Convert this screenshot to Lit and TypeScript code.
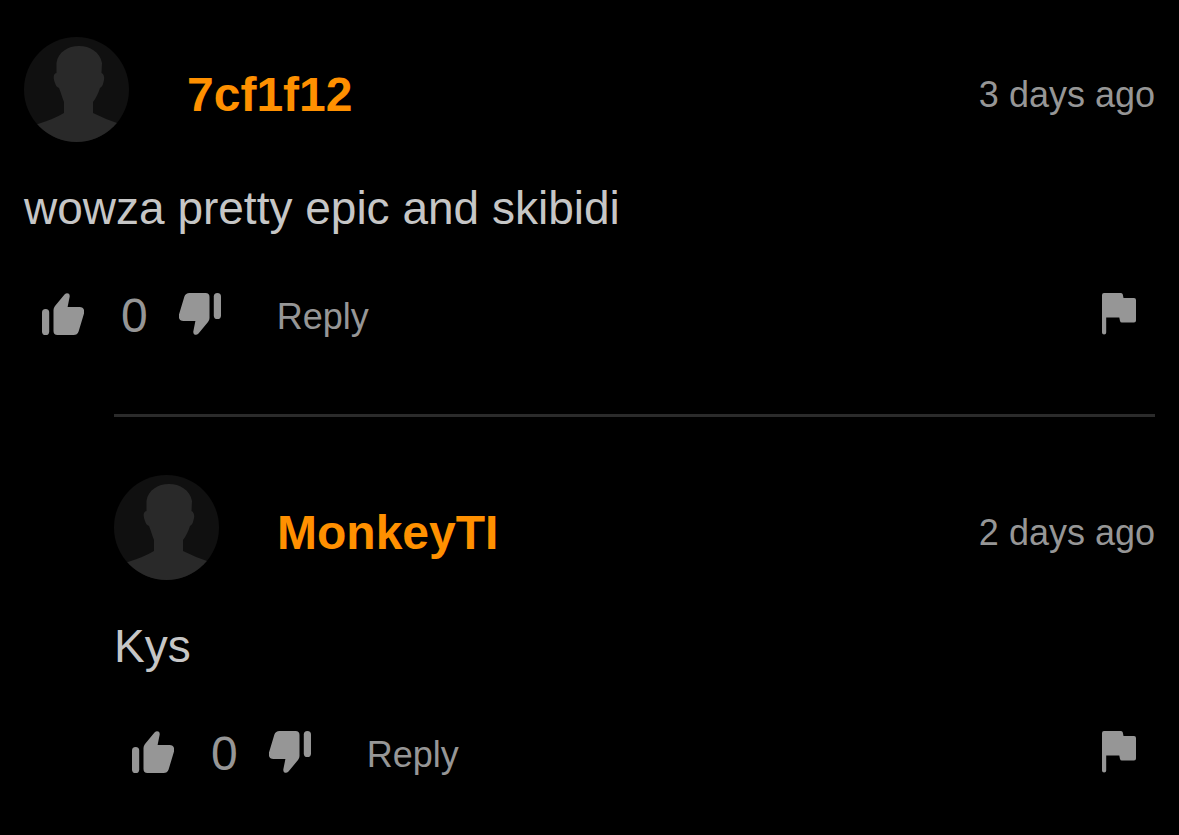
import { LitElement, html, svg, css } from "lit";
import { customElement, property } from "lit/decorators.js";

interface Comment {
  author: string;
  age: string;
  text: string;
  votes: number;
}

const thread: { comment: Comment; replies: Comment[] } = {
  comment: { author: "7cf1f12", age: "3 days ago", text: "wowza pretty epic and skibidi", votes: 0 },
  replies: [{ author: "MonkeyTI", age: "2 days ago", text: "Kys", votes: 0 }],
};

// Thumb pointing up; the dislike icon is the same shape turned round.
const thumb = svg`
  <rect x="0" y="16" width="7.200" height="26" rx="3.600" />
  <path d="M11.500 17Q11.500 14.800 13 13L22.500 1.500Q24.800 -.8 26.900 .8Q28 2 27.600 4L25.600 14H37.500Q42.200 14 42.200 18.600Q42.200 20 41.700 21.500L36.600 38.500Q35.400 42 31.500 42H15.500Q11.500 42 11.500 38Z" />
`;

@customElement("comment-item")
export class CommentItem extends LitElement {
  @property({ attribute: false }) comment!: Comment;

  static styles = css`
    :host {
      display: block;
    }
    .header {
      display: flex;
      align-items: center;
    }
    .avatar {
      width: 105px;
      height: 105px;
      flex: none;
      border-radius: 50%;
      margin-right: 58px;
    }
    .byline {
      flex: 1;
      display: flex;
      align-items: center;
      justify-content: space-between;
      padding-top: 10px;
    }
    .author {
      color: #ff9000;
      font-size: 48px;
      font-weight: 700;
      line-height: 56px;
      text-decoration: none;
    }
    .age {
      color: #969696;
      font-size: 36px;
      line-height: 40px;
    }
    .text {
      margin: 38px 0 50px;
      color: #c6c6c6;
      font-size: 46px;
      line-height: 56px;
    }
    .actions {
      display: flex;
      align-items: center;
      height: 56px;
      padding: 0 18px;
      color: #969696;
    }
    button {
      display: block;
      padding: 0;
      border: 0;
      background: none;
      color: inherit;
      font: inherit;
      cursor: pointer;
    }
    .icon {
      display: block;
      width: 42px;
      height: 42px;
      fill: currentColor;
    }
    .down {
      transform: rotate(180deg);
    }
    .flag {
      width: 35px;
    }
    .votes {
      margin: 0 31px 0 37px;
      padding-top: 4px;
      font-size: 48px;
      line-height: 56px;
    }
    .reply {
      margin: 0 auto 0 56px;
      padding-top: 6px;
      font-size: 36px;
      line-height: 40px;
    }
  `;

  render() {
    const c = this.comment;
    return html`
      <article>
        <header class="header">
          <svg class="avatar" viewBox="0 0 105 105" aria-hidden="true">
            <rect width="105" height="105" fill="#101010" />
            <path
              fill="#292929"
              d="M55 9C66 9 76 15 78 26L77.500 36C80 37 81 41 79.500 45C79 48 78 50 76 51C74 57 72 61 69 65V76Q81 82 93 86L105 92V105H0V92L14 87Q30 82 40 76V65C38 60 37 56 35 51Q32 50 31 46Q29 41 30 38Q31 36 32.500 36V26C34 15 44 9 55 9Z"
            />
          </svg>
          <div class="byline">
            <a class="author" href="#">${c.author}</a>
            <time class="age">${c.age}</time>
          </div>
        </header>
        <p class="text">${c.text}</p>
        <div class="actions">
          <button aria-label="Like">
            <svg class="icon" viewBox="0 0 42 42">${thumb}</svg>
          </button>
          <span class="votes">${c.votes}</span>
          <button aria-label="Dislike">
            <svg class="icon down" viewBox="0 0 42 42">${thumb}</svg>
          </button>
          <button class="reply">Reply</button>
          <button aria-label="Report">
            <svg class="icon flag" viewBox="0 0 35 42">
              <path
                d="M2 0H19Q20.500 0 20.800 1.500L21.500 5H32Q34 5 34 7V27.500Q34 29.500 32 29.500H20Q18.300 29.500 18 28L17.300 24.500H4.200V39.500Q4.200 41.500 2.100 41.500T0 39.500V2Q0 0 2 0Z"
              />
            </svg>
          </button>
        </div>
      </article>
    `;
  }
}

@customElement("app-root")
export class AppRoot extends LitElement {
  static styles = css`
    :host {
      display: block;
      box-sizing: border-box;
      min-height: 100vh;
      padding: 37px 24px;
      background: #000;
      font-family: "Liberation Sans", Arial, sans-serif;
    }
    .replies {
      margin: 72px 0 0 90px;
    }
    .reply-item {
      border-top: 3px solid #2b2b2b;
      padding-top: 58px;
    }
  `;

  render() {
    return html`
      <main>
        <comment-item .comment=${thread.comment}></comment-item>
        <section class="replies" aria-label="Replies">
          ${thread.replies.map(
            (r) => html`<div class="reply-item"><comment-item .comment=${r}></comment-item></div>`
          )}
        </section>
      </main>
    `;
  }
}
